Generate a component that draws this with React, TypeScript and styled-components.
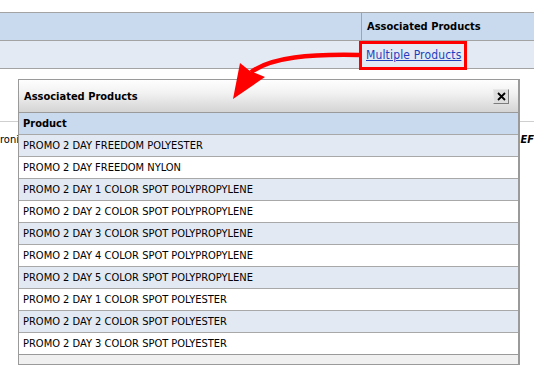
import styled, { createGlobalStyle } from "styled-components";

const GlobalStyle = createGlobalStyle`
  html, body {
    margin: 0;
    padding: 0;
    background: #ffffff;
  }
  body {
    font-family: "DejaVu Sans Condensed", Tahoma, "Liberation Sans", sans-serif;
    font-size: 11px;
    color: #000;
  }
`;

const Page = styled.div`
  position: relative;
  width: 534px;
  height: 375px;
  overflow: hidden;
  padding-top: 12px;
  box-sizing: border-box;
`;

const Grid = styled.div`
  display: grid;
  grid-template-columns: 361px 1fr;
  border-top: 1px solid #a3a3a3;
`;

const HeadCell = styled.div<{ $divider?: boolean }>`
  height: 27px;
  background: #c9d9ee;
  border-bottom: 1px solid #a3a3a3;
  border-left: ${({ $divider }) => ($divider ? "1px solid #a3a3a3" : "none")};
  display: flex;
  align-items: center;
  padding-left: 5px;
  font-weight: 700;
`;

const DataCell = styled.div`
  height: 27px;
  background: #e3eaf4;
  border-bottom: 1px solid #a3a3a3;
  display: flex;
  align-items: center;
  padding-left: 5px;
`;

const Highlight = styled.span`
  margin-left: -7px;
  margin-top: 1px;
  padding: 4px 3px 5px 4px;
  border: 3px solid #ff0000;
`;

const Link = styled.a`
  color: #1f3fbf;
  font-size: 12px;
  letter-spacing: 0.15px;
  text-decoration: underline;
`;

const BelowLine = styled.div`
  margin-top: 52px;
  border-top: 1px solid #cfcfcf;
`;

const BelowRow = styled.div`
  display: flex;
  justify-content: space-between;
  padding-top: 11px;
  font-size: 11px;
`;

const Strong = styled.span`
  font-weight: 700;
  font-style: italic;
`;

const Dialog = styled.div`
  position: absolute;
  left: 18px;
  top: 79px;
  width: 499px;
  height: 284px;
  border: 1px solid #9a9a9a;
  border-right: 2px solid #9a9a9a;
  background: #f0f0f0;
  display: flex;
  flex-direction: column;
`;

const TitleBar = styled.div`
  height: 32px;
  background: linear-gradient(#fefefe, #f2f2f2 40%, #d4d4d4);
  display: flex;
  align-items: center;
  justify-content: space-between;
  padding: 0 9px 0 5px;
  font-weight: 700;
  flex-shrink: 0;
`;

const CloseBtn = styled.button`
  width: 16px;
  height: 15px;
  padding: 0;
  border: 1px solid #7c7c7c;
  border-top-color: #e8e8e8;
  border-left-color: #e8e8e8;
  background: #dedede;
  display: flex;
  align-items: center;
  justify-content: center;
`;

const Table = styled.div`
  border-top: 1px solid #9a9a9a;
  border-bottom: 1px solid #9a9a9a;
  display: flex;
  flex-direction: column;
`;

const Row = styled.div<{ $bg: string; $bold?: boolean }>`
  height: 21px;
  background: ${({ $bg }) => $bg};
  border-bottom: 1px solid #a8a8a8;
  display: flex;
  align-items: center;
  padding-left: 4px;
  font-weight: ${({ $bold }) => ($bold ? 700 : 400)};
  &:last-child {
    border-bottom: none;
  }
`;

const Arrow = styled.svg`
  position: absolute;
  left: 0;
  top: 0;
  pointer-events: none;
`;

const products = [
  "PROMO 2 DAY FREEDOM POLYESTER",
  "PROMO 2 DAY FREEDOM NYLON",
  "PROMO 2 DAY 1 COLOR SPOT POLYPROPYLENE",
  "PROMO 2 DAY 2 COLOR SPOT POLYPROPYLENE",
  "PROMO 2 DAY 3 COLOR SPOT POLYPROPYLENE",
  "PROMO 2 DAY 4 COLOR SPOT POLYPROPYLENE",
  "PROMO 2 DAY 5 COLOR SPOT POLYPROPYLENE",
  "PROMO 2 DAY 1 COLOR SPOT POLYESTER",
  "PROMO 2 DAY 2 COLOR SPOT POLYESTER",
  "PROMO 2 DAY 3 COLOR SPOT POLYESTER",
];

export default function App() {
  return (
    <>
      <GlobalStyle />
      <Page>
        <Grid>
          <HeadCell />
          <HeadCell $divider>Associated Products</HeadCell>
          <DataCell />
          <DataCell>
            <Highlight>
              <Link href="#">Multiple Products</Link>
            </Highlight>
          </DataCell>
        </Grid>
        <BelowLine />
        <BelowRow>
          <span>roni</span>
          <Strong>EF</Strong>
        </BelowRow>

        <Dialog>
          <TitleBar>
            <span>Associated Products</span>
            <CloseBtn aria-label="close">
              <svg width="9" height="9" viewBox="0 0 9 9">
                <path d="M1 1 L8 8 M8 1 L1 8" stroke="#000" strokeWidth="1.8" />
              </svg>
            </CloseBtn>
          </TitleBar>
          <Table>
            <Row $bg="#c9d9ee" $bold>
              Product
            </Row>
            {products.map((p, i) => (
              <Row key={p} $bg={i % 2 === 0 ? "#e3e9f3" : "#ffffff"}>
                {p}
              </Row>
            ))}
          </Table>
        </Dialog>

        <Arrow width="534" height="375" viewBox="0 0 534 375">
          <path
            d="M359 55 C 310 54, 272 57, 251 72"
            fill="none"
            stroke="#ff0000"
            strokeWidth="4.5"
          />
          <polygon points="233,99 240,63 250,71 265,77" fill="#ff0000" />
        </Arrow>
      </Page>
    </>
  );
}
